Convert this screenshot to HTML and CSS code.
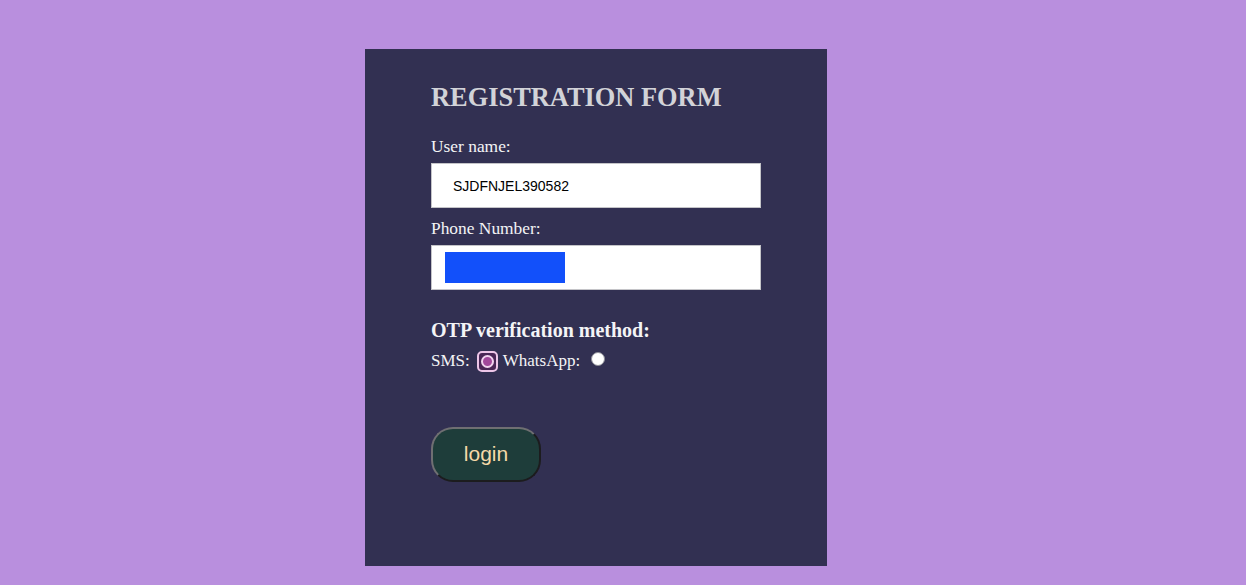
FILE: index.html
```html
<!DOCTYPE html>
<html lang="en">
<head>
    <meta charset="UTF-8">
    <meta name="viewport" content="width=device-width, initial-scale=1.0">
    <title>Registration</title>
    <link rel="stylesheet" href="styles.css">
</head>
<body>
    <div class="card">
        <h2 class="title">REGISTRATION FORM</h2>
        <form id="regForm">
            <label for="userName">User name:</label>
            <input type="text" id="userName" name="userName" value="SJDFNJEL390582">

            <label for="phone">Phone Number:</label>
            <div class="phone-field" id="phone">
                <span class="phone-mask"></span>
            </div>

            <h3 class="otp-title">OTP verification method:</h3>
            <div class="otp-row">
                <span>SMS:</span>
                <span class="radio-focus"><input type="radio" name="otp" value="sms" class="radio-sms" checked></span>
                <span class="wa-label">WhatsApp:</span>
                <input type="radio" name="otp" value="whatsapp" class="radio-plain">
            </div>

            <button type="submit" class="login-btn">login</button>
        </form>
    </div>
</body>
</html>
```

FILE: styles.css
```css
body {
    margin: 0;
    background-color: #b98fde;
    font-family: "Liberation Serif", "Times New Roman", serif;
}
.card {
    width: 462px;
    height: 517px;
    margin: 49px 0 0 365px;
    padding: 33px 66px 0;
    box-sizing: border-box;
    background-color: #323052;
    color: #f4f4f6;
}
.title {
    margin: 0 0 24px;
    font-size: 26.4px;
    line-height: 30px;
    font-weight: bold;
    color: #d2d3d8;
}
label {
    display: block;
    font-size: 17.4px;
    line-height: 20px;
    margin-bottom: 7px;
}
input[type="text"] {
    display: block;
    width: 330px;
    height: 45px;
    box-sizing: border-box;
    margin: 0 0 10px;
    padding: 0 0 0 21px;
    border: 1px solid #c4c4c8;
    background: #fff;
    font-family: "Liberation Sans", Arial, sans-serif;
    font-size: 14px;
    color: #000;
    outline: none;
}
.phone-field {
    width: 330px;
    height: 45px;
    box-sizing: border-box;
    padding: 6px 13px;
    border: 1px solid #c4c4c8;
    background: #fff;
}
.phone-mask {
    display: block;
    width: 120px;
    height: 31px;
    background-color: #1250fa;
}
.otp-title {
    margin: 28px 0 8px;
    font-size: 20px;
    line-height: 24px;
    font-weight: bold;
}
.otp-row {
    display: flex;
    align-items: center;
    font-size: 17px;
    line-height: 22px;
}
.radio-focus {
    display: flex;
    align-items: center;
    justify-content: center;
    width: 21px;
    height: 21px;
    box-sizing: border-box;
    margin-left: 7px;
    border: 2px solid #edc6e8;
    border-radius: 5px;
    background-color: #4a2656;
}
.radio-sms {
    appearance: none;
    width: 13px;
    height: 13px;
    margin: 0;
    box-sizing: border-box;
    border: 2px solid #f1d3ef;
    border-radius: 50%;
    background-color: #a2479b;
}
.wa-label {
    margin-left: 5px;
}
.radio-plain {
    appearance: none;
    width: 14px;
    height: 14px;
    margin: -4px 0 0 11px;
    box-sizing: border-box;
    border: 1px solid #8d8d96;
    border-radius: 50%;
    background-color: #fff;
}
.login-btn {
    display: block;
    width: 110px;
    height: 55px;
    margin-top: 55px;
    padding: 0 0 2px;
    border: 2px solid;
    border-color: #6f6f72 #1c1c1e #1c1c1e #6f6f72;
    border-radius: 22px;
    background-color: #1e3d3a;
    color: #f5d9a8;
    font-family: "Liberation Sans", Arial, sans-serif;
    font-size: 21px;
    cursor: pointer;
}
```
